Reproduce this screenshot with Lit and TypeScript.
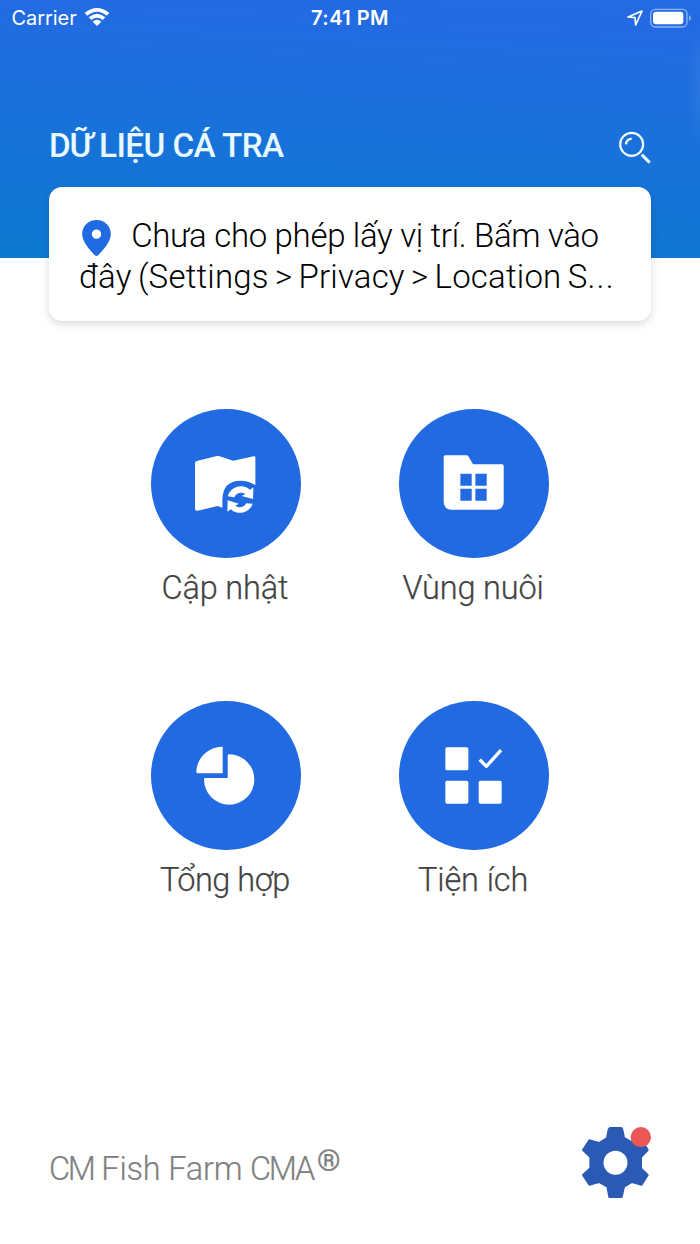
import { LitElement, html, svg, css } from "lit";
import { customElement, property } from "lit/decorators.js";

const icons: Record<string, unknown> = {
  update: svg`<svg viewBox="34 25 448 448">
    <path fill="#fff" d="M171 181 L235 165 L281 180 L342 167 Q347 166 347 171 L347 253 Q325 240 303 240 Q249 240 248 297 L248 321 L234 316 L174 330 Q166 331 166 324 L166 187 Q166 182 171 181Z"/>
    <path fill="#fff" d="M264 287 A41 41 0 0 1 331 267 L341 260 L340 295 L306 286 L317 280 A22 22 0 0 0 284 290Z"/>
    <path fill="#fff" d="M339 309 A41 41 0 0 1 273 326 L263 333 L264 299 L297 309 L287 315 A22 22 0 0 0 320 308Z"/>
  </svg>`,
  farms: svg`<svg viewBox="28 25 448 448">
    <path fill="#fff" d="M167 164 H230 Q234 164 236 167 L250 191 H337 Q342 191 342 196 V304 Q341 326 319 327 H185 Q163 326 162 304 V169 Q162 164 167 164Z"/>
    <path fill="#216ae2" d="M212 219h34v36h-34zM257 219h34v36h-34zM212 264h34v36h-34zM257 264h34v36h-34z"/>
  </svg>`,
  summary: svg`<svg viewBox="34 32 448 448">
    <path fill="#fff" d="M245 169 Q249 168 249 172 V249 H174 Q170 249 170 245 C171 204 203 171 245 169Z"/>
    <path fill="#fff" d="M264 196 Q264 192 268 192 A75.500 75.500 0 1 1 193 267 Q193 263 197 263 H264Z"/>
  </svg>`,
  utilities: svg`<svg viewBox="28 32 448 448">
    <rect fill="#fff" x="167" y="171" width="69" height="69" rx="5"/>
    <rect fill="#fff" x="167" y="271" width="69" height="69" rx="5"/>
    <rect fill="#fff" x="267" y="271" width="69" height="69" rx="5"/>
    <path fill="none" stroke="#fff" stroke-width="10" stroke-linejoin="round" d="M270 208 L290 228 L334 179"/>
  </svg>`,
};

@customElement("status-bar")
class StatusBar extends LitElement {
  static styles = css`
    :host { display: grid; grid-template-columns: 1fr auto 1fr; height: 36px; align-items: center; color: #fff; font: 400 20px/24px Inter, "Liberation Sans", sans-serif; }
    .left { display: flex; align-items: center; padding-left: 11.500px; }
    .carrier { letter-spacing: -0.050px; }
    .wifi { width: 26px; height: 20px; margin-left: 7.700px; margin-top: -2px; }
    .time { font-weight: 600; letter-spacing: 0.450px; }
    .right { display: flex; justify-content: flex-end; align-items: center; padding-right: 8px; }
    .loc { width: 16px; height: 16px; margin-right: 7px; }
    .bat { width: 42px; height: 20px; margin-top: -1px; }
  `;
  render() {
    return html`
      <div class="left">
        <span class="carrier">Carrier</span>
        <svg class="wifi" viewBox="0 0 78 60">
          <path fill="#fff" d="M2 18 Q39 -12 76 18 L68 26 Q39 2 10 26Z M14 31 Q39 10 64 31 L56 39 Q39 25 22 39Z M26 44 Q39 33 52 44 L39 57Z"/>
        </svg>
      </div>
      <span class="time">7:41 PM</span>
      <div class="right">
        <svg class="loc" viewBox="0 0 48 48">
          <path fill="none" stroke="#fff" stroke-width="5" stroke-linejoin="round" d="M3 21 L45 3 L26 45 L24 23Z"/>
        </svg>
        <svg class="bat" viewBox="0 0 126 60">
          <rect x="2" y="4" width="109" height="53" rx="14" fill="none" stroke="#fff" stroke-opacity=".5" stroke-width="4"/>
          <rect x="9" y="11" width="91" height="38" rx="9" fill="#fff"/>
          <path d="M117 21 Q129 30 117 40Z" fill="#fff" fill-opacity=".5"/>
        </svg>
      </div>`;
  }
}

@customElement("menu-tile")
class MenuTile extends LitElement {
  @property() icon = "";
  @property() label = "";
  @property({ type: Number }) track = 0;
  static styles = css`
    :host { display: flex; flex-direction: column; align-items: center; }
    .disc { width: 149.4px; height: 149.4px; border-radius: 50%; background: #216ae2; }
    .disc svg { display: block; width: 100%; height: 100%; }
    .label { margin: 10px 2px 0 0; font: 350 32.5px/40px Roboto, sans-serif; color: #434343; -webkit-text-stroke: 0.250px #434343; white-space: nowrap; }
  `;
  render() {
    return html`<div class="disc">${icons[this.icon]}</div><span class="label" style="letter-spacing: ${this.track}px">${this.label}</span>`;
  }
}

@customElement("app-root")
class AppRoot extends LitElement {
  static styles = css`
    :host { display: flex; flex-direction: column; width: 700px; height: 1244px; overflow: hidden; background: #fff; font-family: Roboto, sans-serif; }
    .header { height: 257.5px; flex: none; background: radial-gradient(ellipse 14px 62px at 701px 86px, rgba(255,255,255,.07), transparent), linear-gradient(183deg, #246ae3 6%, #0c79d0 100%); }
    .bar { display: flex; justify-content: space-between; align-items: center; height: 40px; padding: 90px 49px 0 49px; }
    .title { color: #e8f9ff; font-weight: 500; font-size: 33.3px; line-height: 40px; letter-spacing: -0.580px; }
    .title .first { letter-spacing: -1.150px; }
    .search { width: 33px; height: 33px; margin-top: 3px; }
    .card { flex: none; box-sizing: border-box; margin: -71px 49px 0 48.700px; height: 134.500px; border-radius: 13px; padding: 28.500px 30px 0 31px; background: #fff; box-shadow: 0 3px 8px rgba(0,0,0,.15); }
    .notice { display: flex; flex-direction: column; margin: 0; font-weight: 350; font-size: 33px; line-height: 41px; color: #000; white-space: nowrap; }
    .one { display: flex; height: 41px; letter-spacing: -0.320px; }
    .two { letter-spacing: 0.200px; word-spacing: -2px; margin-left: -0.700px; }
    .two .dots { letter-spacing: 1.200px; }
    .pin { flex: none; width: 29px; height: 36px; margin: 5px 20.500px 0 2px; }
    .grid { display: grid; grid-template-columns: 248.200px 248.200px; grid-auto-rows: 292.400px; justify-content: center; margin-top: 87.500px; }
    .footer { display: flex; justify-content: space-between; align-items: flex-start; margin-top: auto; height: 119px; padding: 0 48px 0 49px; }
    .brand { display: flex; margin-top: 24px; font-weight: 350; font-size: 32.5px; line-height: 40px; letter-spacing: -0.200px; color: #808080; -webkit-text-stroke: 0.200px #808080; }
    .brand .tight { letter-spacing: -2.300px; }
    .reg { font-size: 30px; font-weight: 500; line-height: 24px; margin-left: 4px; }
    .gear { width: 71px; height: 73px; }
  `;
  render() {
    return html`
      <div class="header">
        <status-bar></status-bar>
        <div class="bar">
          <span class="title"><span class="first">DỮ </span>LIỆU CÁ TRA</span>
          <svg class="search" viewBox="0 0 99 99" fill="none" stroke="#f0fbff">
            <circle cx="41" cy="40" r="34.500" stroke-width="6.500"/>
            <path stroke-width="7" d="M24 40 Q25 25 41 23"/>
            <path stroke-width="9" d="M71 71 L95 95"/>
          </svg>
        </div>
      </div>
      <div class="card">
        <p class="notice">
          <span class="one"><svg class="pin" viewBox="0 0 86 108"><path fill="#216ae2" fill-rule="evenodd" d="M43 0 C67 0 86 18 86 42 C86 67 62 90 48 106 Q43 110 38 106 C24 90 0 67 0 42 C0 18 19 0 43 0Z M43 28.500 A14 14 0 1 0 43 56.500 A14 14 0 1 0 43 28.500Z"/></svg>Chưa cho phép lấy vị trí. Bấm vào</span>
          <span class="two">đây (Settings &gt; Privacy &gt; Location S<span class="dots">...</span></span>
        </p>
      </div>
      <div class="grid">
        <menu-tile icon="update" label="Cập nhật" track="-0.15"></menu-tile>
        <menu-tile icon="farms" label="Vùng nuôi" track="-0.15"></menu-tile>
        <menu-tile icon="summary" label="Tổng hợp" track="-0.5"></menu-tile>
        <menu-tile icon="utilities" label="Tiện ích" track="-0.1"></menu-tile>
      </div>
      <div class="footer">
        <div class="brand"><span><span class="tight">CM</span> Fish Farm <span class="tight">CMA</span></span><span class="reg">®</span></div>
        <svg class="gear" viewBox="64 45 213 219">
          <path fill="#2b5ab5" stroke="#2b5ab5" stroke-width="6" stroke-linejoin="round" d="M151 54 H184 Q187 54 188 59 L193 84 L217 97 L246 89 L264 120 L244 141 V175 L264 195 L246 224 L217 216 L193 230 L186 261 H149 L143 230 L118 216 L89 224 L70 195 L92 175 V141 L70 120 L89 91 L118 99 L142 84 L147 58Z"/>
          <circle cx="167.500" cy="158" r="36" fill="#fff"/>
          <circle cx="243.500" cy="81.500" r="30.500" fill="#eb5757"/>
        </svg>
      </div>`;
  }
}
